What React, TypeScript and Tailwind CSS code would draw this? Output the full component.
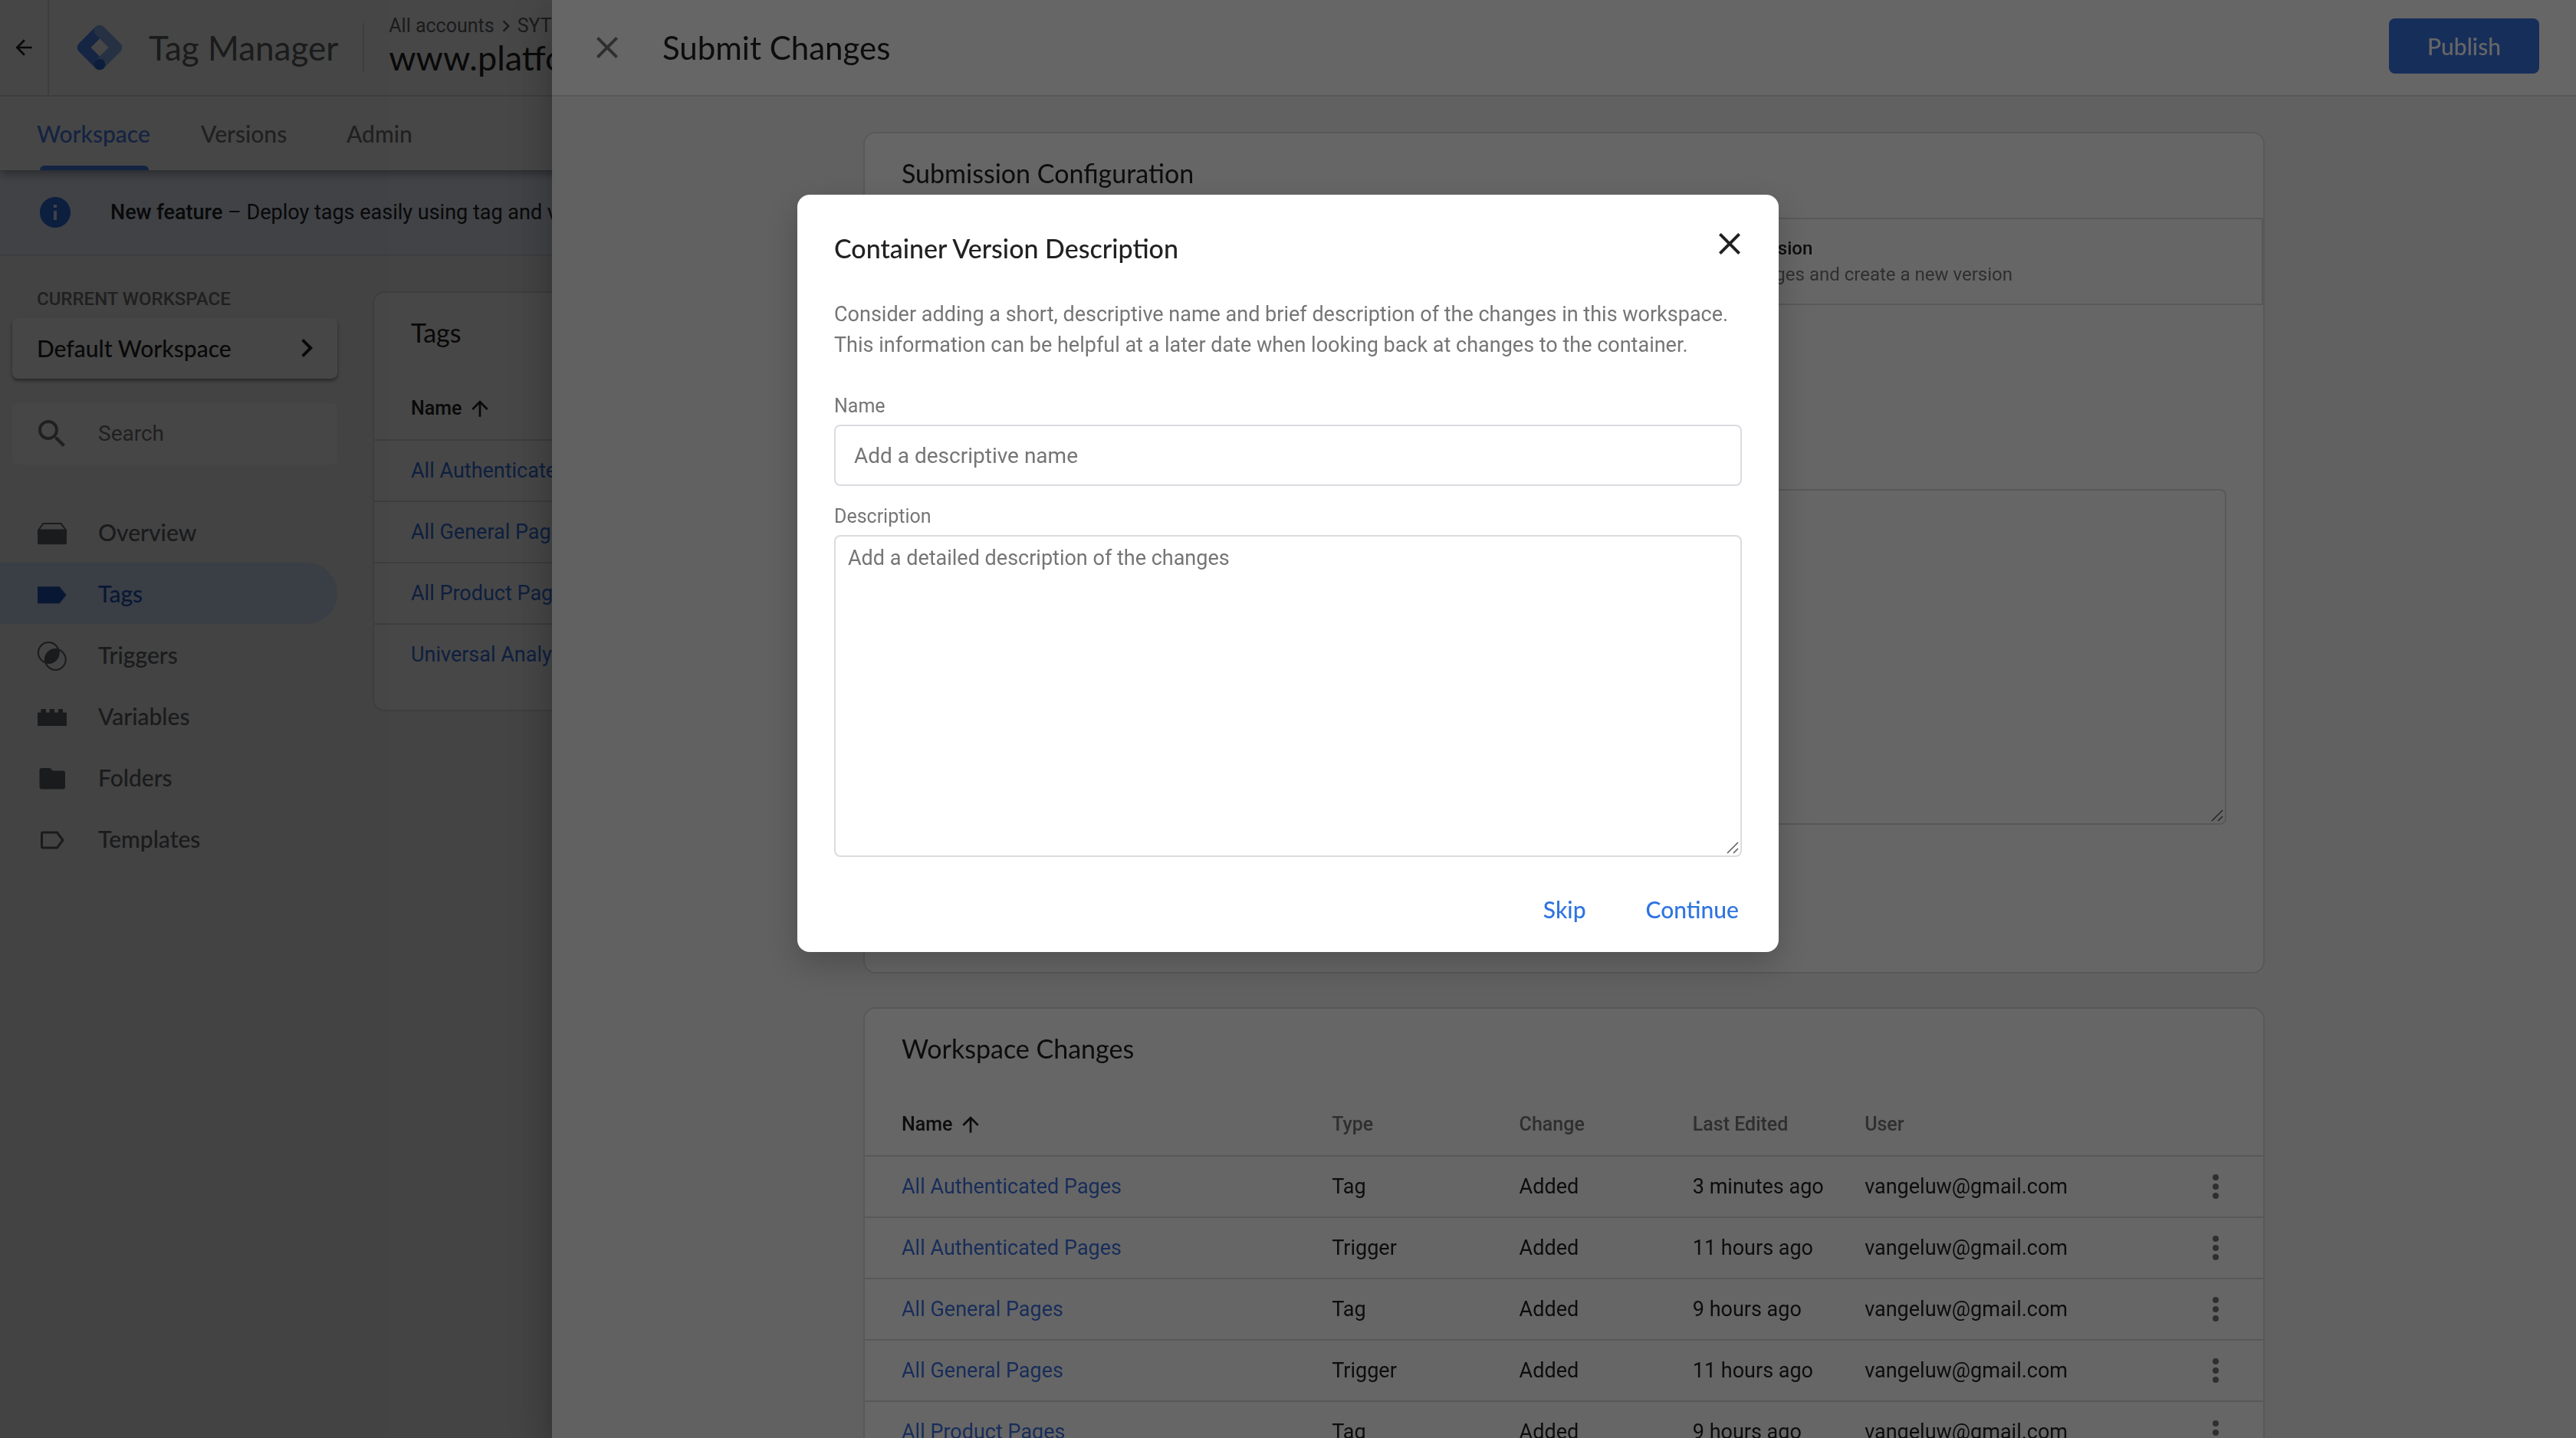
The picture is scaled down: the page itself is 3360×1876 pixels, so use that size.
import React from 'react';

const DISPLAY = "font-['Lato','Roboto',sans-serif]";

type IconProps = { className?: string };

const Close = ({ className }: IconProps) => (
  <svg viewBox="0 0 24 24" fill="currentColor" className={className} aria-hidden="true">
    <path d="M19 6.41 17.59 5 12 10.59 6.41 5 5 6.41 10.59 12 5 17.59 6.41 19 12 13.41 17.59 19 19 17.59 13.41 12z" />
  </svg>
);

const ArrowBack = ({ className }: IconProps) => (
  <svg viewBox="0 0 24 24" fill="currentColor" className={className} aria-hidden="true">
    <path d="M20 11H7.83l5.59-5.59L12 4l-8 8 8 8 1.41-1.41L7.83 13H20v-2z" />
  </svg>
);

const ArrowUp = ({ className }: IconProps) => (
  <svg viewBox="0 0 24 24" fill="currentColor" className={className} aria-hidden="true">
    <path d="M4 12l1.41 1.41L11 7.83V20h2V7.83l5.58 5.59L20 12l-8-8-8 8z" />
  </svg>
);

const ChevronRight = ({ className }: IconProps) => (
  <svg viewBox="0 0 24 24" fill="currentColor" className={className} aria-hidden="true">
    <path d="M10 6 8.59 7.41 13.17 12l-4.58 4.59L10 18l6-6z" />
  </svg>
);

const Search = ({ className }: IconProps) => (
  <svg viewBox="0 0 24 24" fill="currentColor" className={className} aria-hidden="true">
    <path d="M15.5 14h-.79l-.28-.27A6.47 6.47 0 0 0 16 9.5 6.5 6.5 0 1 0 9.5 16c1.61 0 3.09-.59 4.23-1.57l.27.28v.79l5 4.99L20.49 19l-4.99-5zm-6 0C7.01 14 5 11.99 5 9.5S7.01 5 9.5 5 14 7.01 14 9.5 11.99 14 9.5 14z" />
  </svg>
);

const MoreVert = ({ className }: IconProps) => (
  <svg viewBox="0 0 24 24" fill="currentColor" className={className} aria-hidden="true">
    <circle cx="12" cy="6" r="2" />
    <circle cx="12" cy="12" r="2" />
    <circle cx="12" cy="18" r="2" />
  </svg>
);

const Info = ({ className }: IconProps) => (
  <svg viewBox="2 2 20 20" fill="currentColor" className={className} aria-hidden="true">
    <path d="M12 2C6.48 2 2 6.48 2 12s4.48 10 10 10 10-4.48 10-10S17.52 2 12 2zm1 15h-2v-6h2v6zm0-8h-2V7h2v2z" />
  </svg>
);

const Logo = () => (
  <svg viewBox="-30 -30 60 60" className="size-[60px] shrink-0" fill="none" strokeWidth="14.6" strokeLinejoin="round" aria-hidden="true">
    <path d="M0 -22 L-22 0 L0 22" stroke="#4f86f5" />
    <path d="M0 -22 L22 0 L0 22" stroke="#8ab4f8" strokeLinecap="round" />
    <circle cx="0" cy="22" r="7.3" fill="#2f6ddb" />
  </svg>
);

const OverviewIcon = () => (
  <>
    <path d="M2.5 17 8.5 9H31.5L37.5 17" fill="none" stroke="currentColor" strokeWidth="2" />
    <path d="M1 16.5H39V34a2.3 2.3 0 0 1-2.3 2.3H3.3A2.3 2.3 0 0 1 1 34z" />
  </>
);
const TagIcon = () => <path d="M1 11.3H29.5L38.5 22.3L29.5 33.3H1z" />;
const TriggerIcon = () => (
  <>
    <clipPath id="trigger-lens">
      <circle cx="15.3" cy="17.5" r="14" />
    </clipPath>
    <circle cx="24.3" cy="26.5" r="14" clipPath="url(#trigger-lens)" />
    <circle cx="15.3" cy="17.5" r="13.4" fill="none" stroke="currentColor" strokeWidth="2" />
    <circle cx="24.3" cy="26.5" r="13.4" fill="none" stroke="currentColor" strokeWidth="2" />
  </>
);
const VariableIcon = () => <path d="M1 15.5H5.3V11H12V15.5H16.7V11H23V15.5H28V11H34V15.5H39V33H1z" />;
const FolderIcon = () => (
  <path d="M6.5 8H17.5L21 11.5H34A3 3 0 0 1 37 14.5V32.5A3 3 0 0 1 34 35.5H6.5A3 3 0 0 1 3.5 32.5V11A3 3 0 0 1 6.5 8z" />
);
const TemplateIcon = () => (
  <path d="M8 12H26.5L34 22L26.5 32H8A1.5 1.5 0 0 1 6.5 30.5V13.5A1.5 1.5 0 0 1 8 12z" fill="none" stroke="currentColor" strokeWidth="3" />
);

const NAV = [
  { label: 'Overview', Icon: OverviewIcon },
  { label: 'Tags', Icon: TagIcon, active: true },
  { label: 'Triggers', Icon: TriggerIcon },
  { label: 'Variables', Icon: VariableIcon },
  { label: 'Folders', Icon: FolderIcon },
  { label: 'Templates', Icon: TemplateIcon },
];

const TAGS = ['All Authenticated Pages', 'All General Pages', 'All Product Pages', 'Universal Analytics'];

const CHANGES = [
  ['All Authenticated Pages', 'Tag', '3 minutes ago'],
  ['All Authenticated Pages', 'Trigger', '11 hours ago'],
  ['All General Pages', 'Tag', '9 hours ago'],
  ['All General Pages', 'Trigger', '11 hours ago'],
  ['All Product Pages', 'Tag', '9 hours ago'],
];

function Card({ title, children, className = '' }: { title: string; children: React.ReactNode; className?: string }) {
  return (
    <section className={`rounded-2xl border-2 border-[#dddddd] bg-white ${className}`}>
      <h2 className={`mb-2 flex h-[102px] items-center px-12 text-[34px] text-[#212121] ${DISPLAY}`}>{title}</h2>
      {children}
    </section>
  );
}

function SortedName() {
  return (
    <span className="flex items-center gap-2 text-[#212121]">
      Name
      <ArrowUp className="size-8" />
    </span>
  );
}

function TextArea({ id, label, placeholder, className }: { id: string; label?: string; placeholder?: string; className: string }) {
  return (
    <div className="relative">
      <textarea
        id={id}
        aria-label={label}
        placeholder={placeholder}
        className={`block w-full resize-none rounded-lg border-2 bg-white px-4 py-2 text-[27px] leading-10 placeholder:text-[#757575] ${className}`}
      />
      <svg viewBox="0 0 16 16" className="absolute right-1 bottom-1 size-4" stroke="#5a5a5a" strokeWidth="1.5" aria-hidden="true">
        <path d="M1 15 15 1M9 15 15 9" />
      </svg>
    </div>
  );
}

function Workspace() {
  return (
    <div className="isolate min-h-screen bg-[#f2f2f2]">
      <header className="relative z-10 bg-white shadow-[0_4px_12px_rgba(0,0,0,0.4)]">
        <div className="flex h-[126px] items-center border-b-2 border-[#dddddd]">
          <a href="#back" aria-label="Back" className="flex w-16 items-center justify-center self-stretch border-r-2 border-[#dddddd] text-[#212121]">
            <ArrowBack className="size-8" />
          </a>
          <div className="flex items-center gap-[34px] pl-9">
            <Logo />
            <span className={`text-[44px] whitespace-nowrap text-[#5f6368] ${DISPLAY}`}>Tag Manager</span>
          </div>
          <div className="ml-8 h-16 w-0.5 bg-[#dddddd]" />
          <div className="ml-8 pb-1.5">
            <div className="flex items-center text-[25px] leading-8 whitespace-nowrap text-[#5f6368]">
              All accounts
              <ChevronRight className="size-[30px]" />
              SYTYCD
            </div>
            <div className={`text-[45px] leading-[50px] whitespace-nowrap text-[#212121] ${DISPLAY}`}>www.platform.com</div>
          </div>
        </div>
        <nav className={`flex h-24 gap-16 px-12 text-[30px] font-medium text-[#757575] ${DISPLAY}`}>
          <a href="#workspace" className="relative flex w-[150px] items-center text-[#4a80ee]">
            Workspace
            <span className="absolute bottom-0 left-1 h-1.5 w-[142px] rounded-t-md bg-[#4a80ee]" />
          </a>
          <a href="#versions" className="flex w-[126px] items-center">Versions</a>
          <a href="#admin" className="flex items-center">Admin</a>
        </nav>
      </header>
      <div className="flex h-28 items-center gap-[52px] border-b-2 border-[#dddddd] bg-[#e8f0fe] pl-[52px] text-[27px] whitespace-nowrap text-[#212121]">
        <Info className="size-10 shrink-0 text-[#3270e0]" />
        <p>
          <strong className="font-medium">New feature</strong> – Deploy tags easily using tag and variable templates
        </p>
      </div>
      <div className="flex">
        <aside className="w-[440px] shrink-0 pt-10">
          <p className="pl-12 text-[24px] leading-8 font-medium text-[#757575]">CURRENT WORKSPACE</p>
          <button className={`mt-2 ml-4 flex h-20 w-[424px] items-center justify-between rounded-lg bg-white pr-4 pl-8 text-[30px] font-medium text-[#212121] shadow-[0_3px_4px_rgba(0,0,0,0.4)] ${DISPLAY}`}>
            Default Workspace
            <ChevronRight className="size-12" />
          </button>
          <label className="mt-8 ml-4 flex h-20 items-center gap-9 rounded-lg bg-white pl-7 text-[#757575]">
            <Search className="size-12 shrink-0" />
            <input type="search" aria-label="Search" placeholder="Search" className="w-full min-w-0 bg-transparent text-[28px] placeholder:text-[#757575]" />
          </label>
          <nav className={`mt-12 text-[30px] font-medium ${DISPLAY}`}>
            {NAV.map(({ label, Icon, active }) => (
              <a
                key={label}
                href={`#${label.toLowerCase()}`}
                className={`flex h-20 items-center gap-10 rounded-r-full pl-12 ${active ? 'bg-[#d4e1fc] text-[#1f5abf]' : 'text-[#5f6368]'}`}
              >
                <svg viewBox="0 0 40 40" fill="currentColor" className="size-10 shrink-0 overflow-visible" aria-hidden="true">
                  <Icon />
                </svg>
                {label}
              </a>
            ))}
          </nav>
        </aside>
        <main className="grow p-[46px]">
          <Card title="Tags" className="pb-8">
            <table className="w-full text-left">
              <thead>
                <tr className="h-[82px] text-[25px]">
                  <th scope="col" className="px-12 font-medium">
                    <SortedName />
                  </th>
                </tr>
              </thead>
              <tbody>
                {TAGS.map((tag) => (
                  <tr key={tag} className="h-20 border-t-2 border-[#dddddd] text-[27px]">
                    <td className="px-12">
                      <a href="#tag" className="text-[#3270e0]">{tag}</a>
                    </td>
                  </tr>
                ))}
              </tbody>
            </table>
          </Card>
        </main>
      </div>
    </div>
  );
}

function PublishOption({ title, text }: { title?: string; text?: string }) {
  return (
    <button
      aria-label={title ? undefined : 'Publish and Create Version'}
      className="flex h-[114px] flex-1 items-center gap-11 border-2 border-[#dddddd] pl-12 text-left text-[24px] leading-[34px]"
    >
      <span className="size-[72px] rounded-full bg-[#e8e8e8]" />
      <span>
        <span className="block font-medium text-[#212121]">{title}</span>
        <span className="block text-[#757575]">{text}</span>
      </span>
    </button>
  );
}

function SubmitSheet() {
  return (
    <div className="fixed inset-y-0 right-0 left-[720px] overflow-hidden bg-[#f2f2f2] shadow-[0_16px_20px_-10px_rgba(0,0,0,0.2),0_32px_48px_4px_rgba(0,0,0,0.14),0_12px_60px_10px_rgba(0,0,0,0.12)]">
      <header className="flex h-[126px] items-center gap-12 border-b-2 border-[#dddddd] bg-white px-12">
        <button aria-label="Close sheet" className="text-[#757575]">
          <Close className="size-12" />
        </button>
        <h1 className={`grow text-[42px] text-[#212121] ${DISPLAY}`}>Submit Changes</h1>
        <button className={`mb-1 h-[72px] w-[196px] rounded-lg bg-[#3973e0] text-[30px] font-medium text-white ${DISPLAY}`}>Publish</button>
      </header>
      <div className="mx-auto mt-[46px] flex max-w-[1828px] flex-col gap-11">
        <Card title="Submission Configuration" className="pb-48">
          <div className="flex">
            <PublishOption />
            <PublishOption title="Create Version" text="Save changes and create a new version" />
          </div>
          <div className="px-12 pt-[88px]">
            <input aria-label="Version Name" className="mb-[72px] block h-20 w-[800px] rounded-lg border-2 border-[#dddddd] px-6 text-[28px]" />
            <TextArea id="version-description" label="Version Description" className="h-[438px] border-[#dddddd]" />
          </div>
        </Card>
        <Card title="Workspace Changes">
          <table className="w-full table-fixed text-left">
            <colgroup>
              <col className="w-[33.4%]" />
              <col className="w-[13.4%]" />
              <col className="w-[12.4%]" />
              <col className="w-[12.3%]" />
              <col />
              <col className="w-28" />
            </colgroup>
            <thead>
              <tr className="h-[82px] text-[25px] text-[#757575]">
                <th scope="col" className="pl-12 font-medium"><SortedName /></th>
                <th scope="col" className="font-medium">Type</th>
                <th scope="col" className="font-medium">Change</th>
                <th scope="col" className="font-medium">Last Edited</th>
                <th scope="col" className="font-medium">User</th>
                <td />
              </tr>
            </thead>
            <tbody>
              {CHANGES.map(([name, type, edited], i) => (
                <tr key={i} className="h-20 border-t-2 border-[#dddddd] text-[27px] text-[#212121]">
                  <td className="pl-12">
                    <a href="#change" className="text-[#3c72e0]">{name}</a>
                  </td>
                  <td>{type}</td>
                  <td>Added</td>
                  <td>{edited}</td>
                  <td>vangeluw@gmail.com</td>
                  <td>
                    <button aria-label="More actions" className="ml-[26px] block text-[#757575]">
                      <MoreVert className="size-12" />
                    </button>
                  </td>
                </tr>
              ))}
            </tbody>
          </table>
        </Card>
      </div>
    </div>
  );
}

function VersionDialog() {
  return (
    <div className="fixed inset-0 flex items-start justify-center bg-black/60 pt-[254px]">
      <div role="dialog" aria-labelledby="dialog-title" className="w-[1280px] rounded-2xl bg-white px-12 pt-12 pb-5 shadow-[0_16px_40px_rgba(0,0,0,0.2)]">
        <div className="flex h-11 items-start justify-between text-[#212121]">
          <h2 id="dialog-title" className={`text-[34px] leading-[44px] font-medium ${DISPLAY}`}>Container Version Description</h2>
          <button aria-label="Close dialog" className="-mt-2 -mr-2">
            <Close className="size-12" />
          </button>
        </div>
        <p className="mt-11 text-[27px] leading-10 text-[#757575]">
          Consider adding a short, descriptive name and brief description of the changes in this workspace. This information can be helpful at a later
          date when looking back at changes to the container.
        </p>
        <label htmlFor="name" className="mt-11 mb-2 block text-[25px] leading-8 text-[#757575]">Name</label>
        <input
          id="name"
          placeholder="Add a descriptive name"
          className="block h-20 w-full rounded-lg border-2 border-[#dadce0] px-6 text-[28px] placeholder:text-[#757575]"
        />
        <label htmlFor="description" className="mt-6 mb-2 block text-[25px] leading-8 text-[#757575]">Description</label>
        <TextArea id="description" placeholder="Add a detailed description of the changes" className="h-[420px] border-[#dadce0]" />
        <div className={`mt-8 flex h-[72px] justify-end gap-[78px] pr-1 text-[30px] font-medium text-[#2f74e0] ${DISPLAY}`}>
          <button>Skip</button>
          <button>Continue</button>
        </div>
      </div>
    </div>
  );
}

export default function App() {
  return (
    <div className="h-screen overflow-hidden font-['Roboto',sans-serif]">
      <Workspace />
      <div className="fixed inset-0 bg-black/31" />
      <SubmitSheet />
      <VersionDialog />
    </div>
  );
}
